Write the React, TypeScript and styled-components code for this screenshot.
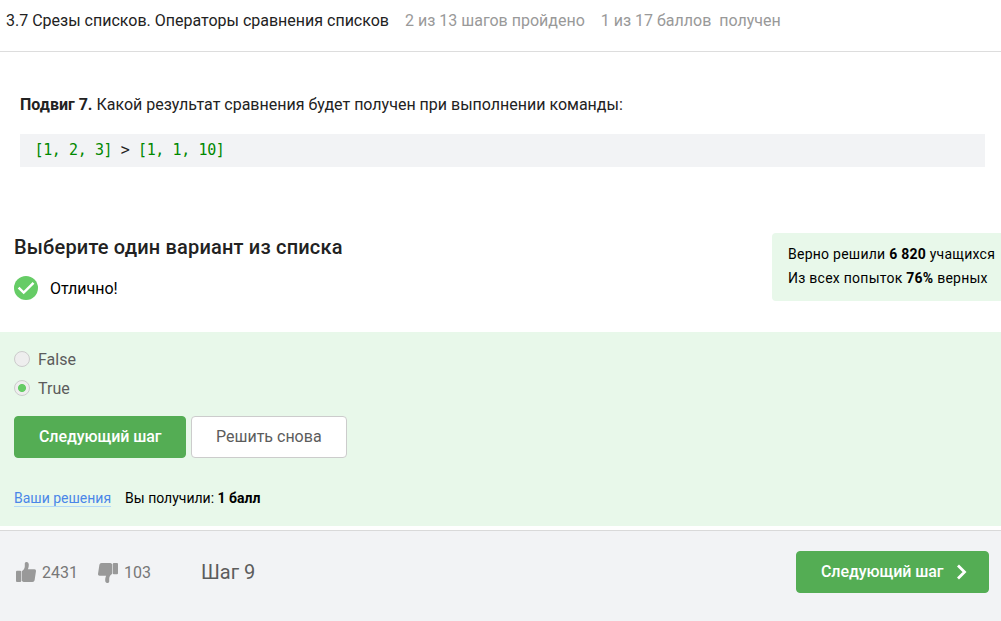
import React from "react";
import styled, { createGlobalStyle } from "styled-components";

const GlobalStyle = createGlobalStyle`
  * { box-sizing: border-box; }
  body {
    margin: 0;
    background: #fff;
    color: #000;
    font-family: Roboto, "Liberation Sans", sans-serif;
    font-size: 16px;
    overflow: hidden;
  }
`;

const Page = styled.div`
  display: flex;
  flex-direction: column;
  height: 621px;
  white-space: nowrap;
`;

const Header = styled.header`
  display: flex;
  gap: 16px;
  height: 52px;
  padding: 9px 6px 0;
  border-bottom: 1px solid #ddd;
  line-height: 24px;
  color: #222;
`;

const Progress = styled.span`
  color: #999;
  white-space: pre;
`;

const Task = styled.section`
  height: 181px;
  padding: 41px 16px 0 20px;
`;

const Question = styled.p`
  margin: 0 0 17px;
  line-height: 24px;
  color: #222;
`;

const Code = styled.pre`
  margin: 0;
  height: 33px;
  padding: 0 14.5px;
  background: #f2f3f5;
  font-family: "DejaVu Sans Mono", monospace;
  font-size: 15px;
  letter-spacing: -0.4px;
  line-height: 33px;
  color: #222;
`;

const Literal = styled.span`
  color: #008800;
`;

const Quiz = styled.section`
  display: flex;
  justify-content: space-between;
  height: 99px;
  padding-left: 14px;
`;

const Title = styled.h2`
  margin: 0;
  font-size: 20px;
  font-weight: 500;
  letter-spacing: 0.18px;
  line-height: 28px;
  color: #222;
`;

const Result = styled.div`
  display: flex;
  gap: 12px;
  margin-top: 15px;
  line-height: 26px;
`;

const Stats = styled.aside`
  width: 229px;
  height: 68px;
  padding: 9px 0 0 16px;
  background: #e8f8ea;
  border-radius: 4px 0 0 4px;
  font-size: 14px;
  line-height: 24px;
  letter-spacing: 0.25px;
`;

const Answers = styled.section`
  height: 194px;
  padding: 13px 14px 0;
  background: #e8f8ea;
`;

const Option = styled.label`
  display: flex;
  gap: 8px;
  height: 29px;
  padding-top: 6px;
  line-height: 17px;
  color: #5c5c5c;
`;

const Radio = styled.span<{ $checked?: boolean }>`
  width: 16px;
  height: 16px;
  border: 1px solid #ccc;
  border-radius: 50%;
  background: ${(p) =>
    p.$checked ? "radial-gradient(circle, #66cc66 3.6px, #eee 4.4px)" : "#eee"};
`;

const Actions = styled.div`
  display: flex;
  gap: 5px;
  margin-top: 13px;
`;

const Button = styled.button<{ $primary?: boolean; $width: number }>`
  display: flex;
  align-items: center;
  gap: 13px;
  width: ${(p) => p.$width}px;
  height: 42px;
  padding: 0 0 1px 24px;
  border: 1px solid ${(p) => (p.$primary ? "#54ad54" : "#ccc")};
  border-radius: 4px;
  background: ${(p) => (p.$primary ? "#54ad54" : "#fff")};
  color: ${(p) => (p.$primary ? "#fff" : "#5c5c5c")};
  font: ${(p) => (p.$primary ? 500 : 400)} 16px Roboto, sans-serif;
  letter-spacing: ${(p) => (p.$primary ? "-0.08px" : "0")};
  white-space: nowrap;
`;

const Score = styled.div`
  display: flex;
  gap: 14px;
  margin-top: 32px;
  font-size: 14px;
  line-height: 16px;
`;

const Link = styled.a`
  height: 17px;
  border-bottom: 1px solid #b3d9f7;
  color: #4a86e8;
`;

const Footer = styled.footer`
  display: flex;
  align-items: center;
  height: 91px;
  margin-top: 4px;
  padding: 0 12px 8px 15px;
  border-top: 1px solid #d9d9d9;
  background: #f2f3f5;
  color: #777;
`;

const Vote = styled.div`
  display: flex;
  align-items: center;
  gap: 5px;
  margin-right: 19px;
`;

const Step = styled.div`
  flex: 1;
  margin-left: 31px;
  font-size: 20px;
  color: #5c5c5c;
`;

const Thumb = ({ down = false }: { down?: boolean }) => (
  <svg width="22" height="22" viewBox="0 0 22 22" fill="#999">
    <g transform={down ? "translate(0 1) rotate(180 11 11)" : undefined}>
      <rect x="1" y="9.700" width="5.200" height="11.300" rx="1" />
      <path d="M6.800 10.200C8.500 9 9.800 7.500 9.800 5.200V2.500C9.800 .300 13.800.300 13.800 3.500C13.800 5.500 13.400 7 12.900 8.200H19.500Q21.200 8.200 21 10L19.600 19.200Q19.300 21 17.500 21H8.500L6.800 20Z" />
    </g>
  </svg>
);

export default function App() {
  return (
    <>
      <GlobalStyle />
      <Page>
        <Header>
          <span>3.7 Срезы списков. Операторы сравнения списков</span>
          <Progress>2 из 13 шагов пройдено</Progress>
          <Progress>1 из 17 баллов{"  "}получен</Progress>
        </Header>
        <Task>
          <Question>
            <b>Подвиг 7.</b> Какой результат сравнения будет получен при выполнении команды:
          </Question>
          <Code>
            <Literal>[1, 2, 3]</Literal> &gt; <Literal>[1, 1, 10]</Literal>
          </Code>
        </Task>
        <Quiz>
          <div>
            <Title>Выберите один вариант из списка</Title>
            <Result>
              <svg width="24" height="24" viewBox="0 0 24 24">
                <circle cx="12" cy="12" r="12" fill="#66cc66" />
                <path d="M4.600 11.700L9.700 16.600L19.500 6.900" fill="none" stroke="#fff" strokeWidth="2.500" />
              </svg>
              <span>Отлично!</span>
            </Result>
          </div>
          <Stats>
            <div>Верно решили <b>6 820</b> учащихся</div>
            <div>Из всех попыток <b>76%</b> верных</div>
          </Stats>
        </Quiz>
        <Answers>
          <Option><Radio />False</Option>
          <Option><Radio $checked />True</Option>
          <Actions>
            <Button $primary $width={172}>Следующий шаг</Button>
            <Button $width={156}>Решить снова</Button>
          </Actions>
          <Score>
            <Link>Ваши решения</Link>
            <span>Вы получили: <b>1 балл</b></span>
          </Score>
        </Answers>
        <Footer>
          <Vote><Thumb />2431</Vote>
          <Vote><Thumb down />103</Vote>
          <Step>Шаг 9</Step>
          <Button $primary $width={193}>
            Следующий шаг
            <svg width="11" height="16" viewBox="0 0 11 16" fill="none" stroke="#fff" strokeWidth="2.800">
              <path d="M2 1.500L8.500 8L2 14.500" />
            </svg>
          </Button>
        </Footer>
      </Page>
    </>
  );
}
